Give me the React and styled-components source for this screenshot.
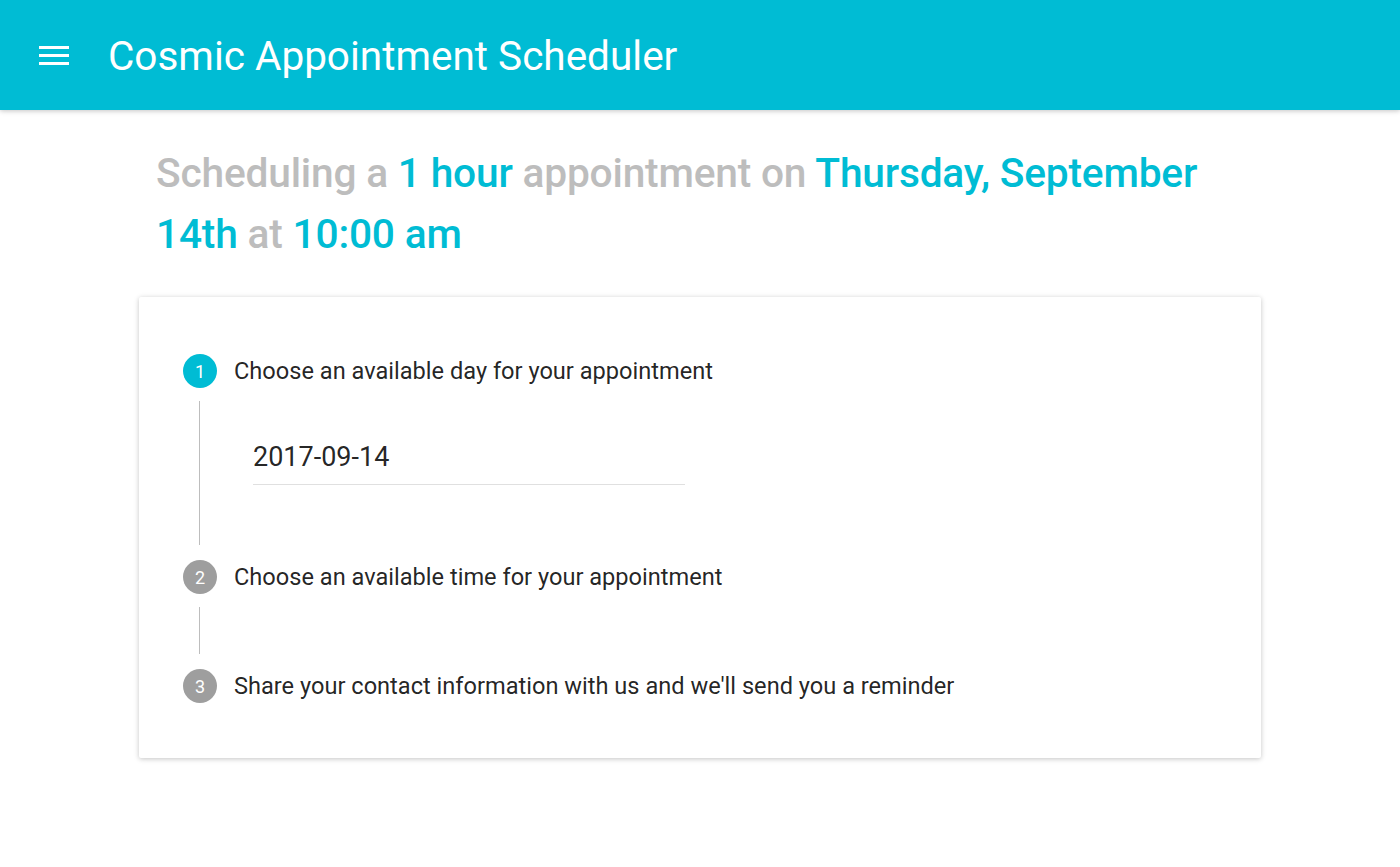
import React from "react";
import styled, { createGlobalStyle } from "styled-components";

const Global = createGlobalStyle`
  html, body { margin: 0; padding: 0; background: #fff; }
  body { font-family: Roboto, "Noto Sans", sans-serif; -webkit-font-smoothing: antialiased; }
  * { box-sizing: border-box; }
`;

const cyan = "#00BCD4";

const AppBar = styled.header`
  height: 110px;
  background: ${cyan};
  display: flex;
  align-items: center;
  padding-left: 39px;
  gap: 39px;
  box-shadow: 0 1px 6px rgba(0,0,0,0.12), 0 1px 4px rgba(0,0,0,0.12);
  position: relative;
  z-index: 1;
`;

const MenuButton = styled.button`
  border: 0;
  background: transparent;
  padding: 0;
  display: flex;
  width: 30px;
  height: 24px;
  cursor: pointer;
`;

const Title = styled.h1`
  margin: 0;
  font-weight: 400;
  font-size: 40.5px;
  color: #fff;
  line-height: 1;
  padding-top: 2px;
`;

const Main = styled.main`
  width: 1122px;
  margin: 0 auto;
  padding: 33px 0 60px;
`;

const Headline = styled.h2`
  margin: 0;
  padding: 0 17px;
  font-size: 40.7px;
  font-weight: 500;
  line-height: 61px;
  color: #bdbdbd;
  letter-spacing: -0.2px;
`;

const Hi = styled.span`
  color: ${cyan};
`;

const Card = styled.section`
  margin-top: 32px;
  background: #fff;
  border-radius: 2px;
  box-shadow: 0 1px 6px rgba(0,0,0,0.12), 0 1px 4px rgba(0,0,0,0.12);
  padding: 57px 44px 55px;
`;

const Step = styled.div`
  display: flex;
  flex-direction: column;
`;

const StepHead = styled.div`
  display: flex;
  align-items: center;
  gap: 17px;
  height: 34px;
`;

const StepIcon = styled.span`
  width: 34px;
  height: 34px;
  border-radius: 50%;
  background: ${(p) => (p.$active ? cyan : "#9e9e9e")};
  color: #fff;
  font-size: 18px;
  display: flex;
  align-items: center;
  justify-content: center;
  flex: none;
`;

const StepLabel = styled.span`
  font-size: 23.6px;
  color: rgba(0,0,0,0.87);
`;

const Connector = styled.div`
  margin: 13px 0 15px 16px;
  border-left: 1px solid #bdbdbd;
  min-height: ${(p) => p.$h}px;
  padding: ${(p) => (p.$content ? "38px 0 60px 53px" : "0")};
`;

const DateField = styled.div`
  width: 432px;
  font-size: 27px;
  line-height: 36px;
  color: rgba(0,0,0,0.87);
  padding-bottom: 9px;
  border-bottom: 1px solid #e0e0e0;
`;

const MenuIcon = () => (
  <svg width="30" height="24" viewBox="0 0 30 24">
    <rect x="0" y="3" width="30" height="3" fill="#fff" />
    <rect x="0" y="11" width="30" height="3" fill="#fff" />
    <rect x="0" y="19" width="30" height="3" fill="#fff" />
  </svg>
);

export default function App() {
  return (
    <>
      <Global />
      <AppBar>
        <MenuButton aria-label="menu"><MenuIcon /></MenuButton>
        <Title>Cosmic Appointment Scheduler</Title>
      </AppBar>
      <Main>
        <Headline>
          Scheduling a <Hi>1 hour</Hi> appointment on <Hi>Thursday, September 14th</Hi> at <Hi>10:00 am</Hi>
        </Headline>
        <Card>
          <Step>
            <StepHead>
              <StepIcon $active>1</StepIcon>
              <StepLabel>Choose an available day for your appointment</StepLabel>
            </StepHead>
            <Connector $content $h={144}>
              <DateField>2017-09-14</DateField>
            </Connector>
          </Step>
          <Step>
            <StepHead>
              <StepIcon>2</StepIcon>
              <StepLabel>Choose an available time for your appointment</StepLabel>
            </StepHead>
            <Connector $h={47} />
          </Step>
          <Step>
            <StepHead>
              <StepIcon>3</StepIcon>
              <StepLabel>Share your contact information with us and we'll send you a reminder</StepLabel>
            </StepHead>
          </Step>
        </Card>
      </Main>
    </>
  );
}
